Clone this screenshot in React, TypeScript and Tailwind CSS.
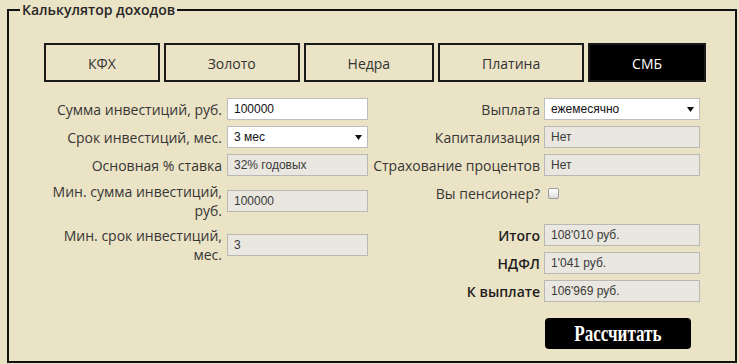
import React from "react";

const TABS = ["КФХ", "Золото", "Недра", "Платина", "СМБ"];

function Field({ value, readOnly }: { value: string; readOnly?: boolean }) {
  return (
    <div
      className={`h-[22px] border px-[6px] flex items-center text-[12px] font-['Liberation_Sans',Arial,sans-serif] ${
        readOnly ? "bg-[#e9e7df] border-[#b8b8b6] text-[#3a3a3a]" : "bg-white border-[#bdbdbd] text-[#111]"
      }`}
    >
      {value}
    </div>
  );
}

function Select({ value }: { value: string }) {
  return (
    <div className="h-[22px] border border-[#bdbdbd] bg-white pl-[6px] pr-[5px] flex items-center justify-between text-[12px] text-[#111] font-['Liberation_Sans',Arial,sans-serif]">
      <span>{value}</span>
      <svg width="7" height="5" viewBox="0 0 7 5">
        <path d="M0 0h7L3.5 5z" fill="#111" />
      </svg>
    </div>
  );
}

function Label({ children, bold }: { children: React.ReactNode; bold?: boolean }) {
  return (
    <div className={`text-right text-[14px] leading-[19px] ${bold ? "font-semibold text-[#1e1e1e]" : "text-[#363636]"}`}>
      {children}
    </div>
  );
}

export default function App() {
  return (
    <div className="w-[739px] h-[364px] bg-[#ebe3c5] overflow-hidden font-['Open_Sans','Noto_Sans',sans-serif]">
      <fieldset className="ml-[7px] w-[730px] h-[363px] border-2 border-[#121212] min-w-0">
        <legend className="ml-[11px] px-[2px] text-[14px] leading-[20px] font-semibold text-[#262626]">
          Калькулятор доходов
        </legend>

        {/* вкладки */}
        <div className="mt-[23px] ml-[35px] w-[662px] flex gap-[4px]">
          {TABS.map((t) => {
            const active = t === "СМБ";
            return (
              <div
                key={t}
                className={`flex-auto h-[39px] border-2 border-[#1a1a1a] pt-[2px] flex items-center justify-center text-[14px] ${
                  active ? "bg-black text-white" : "text-[#333]"
                }`}
              >
                {t}
              </div>
            );
          })}
        </div>

        <div className="mt-[16px] flex">
          {/* левая колонка */}
          <div className="ml-[38px] w-[321px] grid grid-cols-[175px_141px] gap-x-[5px] gap-y-[6px] items-center content-start">
            <Label>Сумма инвестиций, руб.</Label>
            <Field value="100000" />
            <Label>Срок инвестиций, мес.</Label>
            <Select value="3 мес" />
            <Label>Основная % ставка</Label>
            <Field value="32% годовых" readOnly />
            <Label>Мин. сумма инвестиций, руб.</Label>
            <Field value="100000" readOnly />
            <Label>Мин. срок инвестиций, мес.</Label>
            <Field value="3" readOnly />
          </div>

          {/* правая колонка */}
          <div className="ml-[2px] w-[330px]">
            <div className="grid grid-cols-[170px_156px] gap-x-[4px] gap-y-[6px] items-center">
              <Label>Выплата</Label>
              <Select value="ежемесячно" />
              <Label>Капитализация</Label>
              <Field value="Нет" readOnly />
              <Label>Страхование процентов</Label>
              <Field value="Нет" readOnly />
              <Label>Вы пенсионер?</Label>
              <div className="h-[22px] flex items-center pl-[4px]">
                <span className="block w-[11px] h-[11px] rounded-[2px] border border-[#9a9a9a] bg-gradient-to-b from-white to-[#dcdcdc]" />
              </div>
            </div>

            <div className="mt-[20px] grid grid-cols-[170px_156px] gap-x-[4px] gap-y-[6px] items-center">
              <Label bold>Итого</Label>
              <Field value="108'010 руб." readOnly />
              <Label bold>НДФЛ</Label>
              <Field value="1'041 руб." readOnly />
              <Label bold>К выплате</Label>
              <Field value="106'969 руб." readOnly />
            </div>

            <div className="mt-[16px] ml-[175px]">
              <button className="w-[146px] h-[31px] rounded-[4px] bg-black text-white flex items-center justify-center">
                <span className="inline-block scale-x-[0.74] font-['Liberation_Serif',serif] font-bold text-[23px] leading-none">
                  Рассчитать
                </span>
              </button>
            </div>
          </div>
        </div>
      </fieldset>
    </div>
  );
}
